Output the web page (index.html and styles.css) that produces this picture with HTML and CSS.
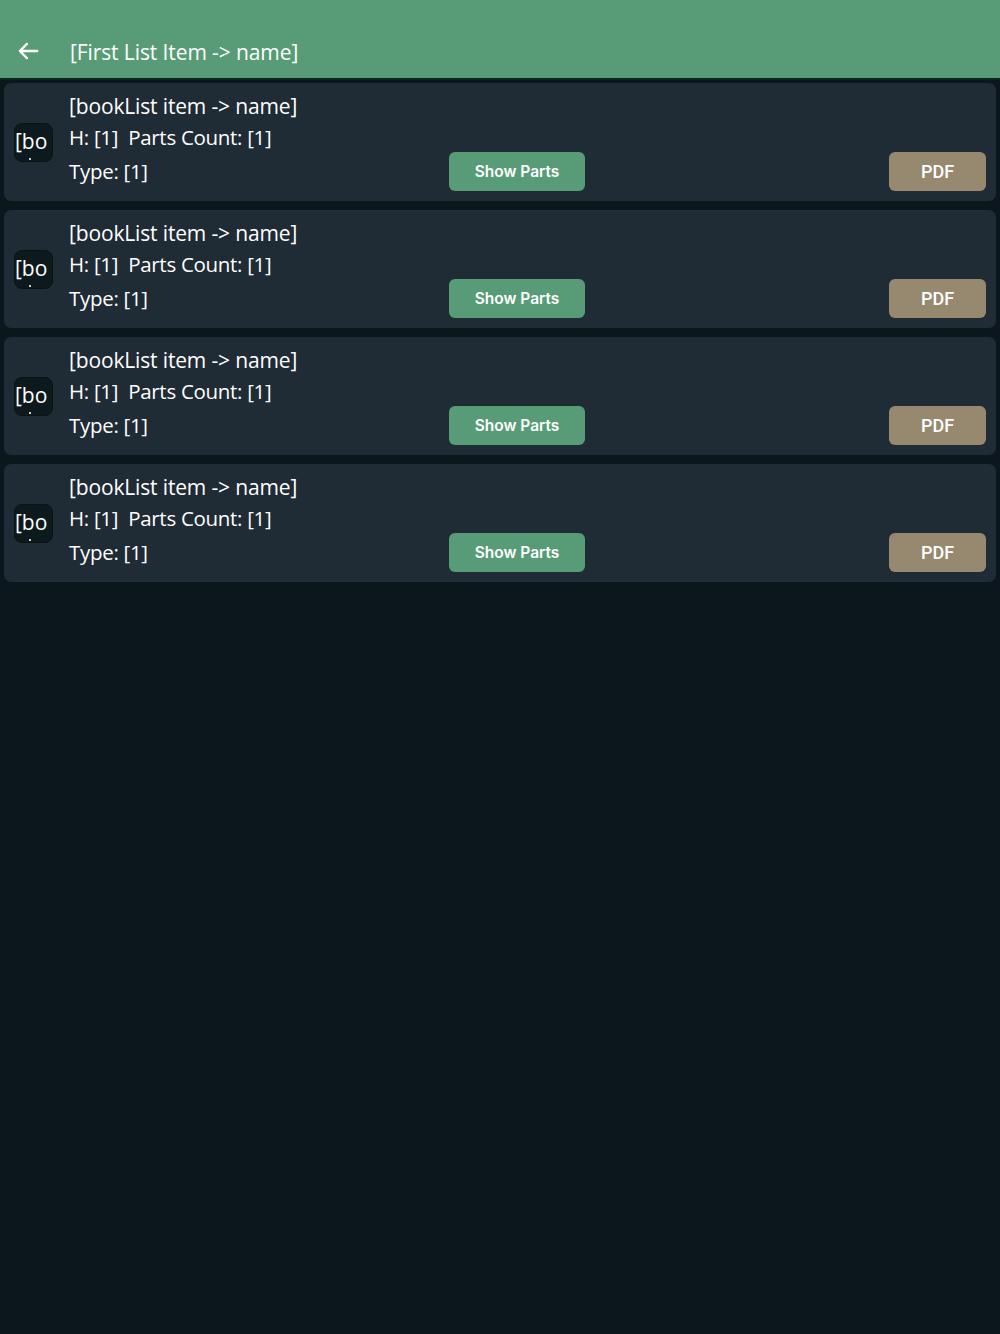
FILE: index.html
```html
<!DOCTYPE html>
<html lang="en">
<head>
  <meta charset="UTF-8" />
  <title>Book List</title>
  <link rel="stylesheet" href="styles.css">
</head>
<body>

<header class="topbar">
  <svg class="back" width="26" height="26" viewBox="0 0 24 24">
    <path d="M20.5 12H4.5M11 5.5L4.5 12l6.5 6.5" fill="none" stroke="#fff" stroke-width="2.2" stroke-linecap="round" stroke-linejoin="round"/>
  </svg>
  <h1 class="title">[First List Item -&gt; name]</h1>
</header>

<main class="list">
  <div class="card">
    <div class="thumb"><span>[bo</span><i></i></div>
    <div class="info">
      <div class="name">[bookList item -&gt; name]</div>
      <div class="meta"><span>H: [1]</span><span>Parts Count: [1]</span></div>
      <div class="bottom">
        <span class="type">Type: [1]</span>
        <button class="btn parts">Show Parts</button>
        <button class="btn pdf">PDF</button>
      </div>
    </div>
  </div>
  <div class="card">
    <div class="thumb"><span>[bo</span><i></i></div>
    <div class="info">
      <div class="name">[bookList item -&gt; name]</div>
      <div class="meta"><span>H: [1]</span><span>Parts Count: [1]</span></div>
      <div class="bottom">
        <span class="type">Type: [1]</span>
        <button class="btn parts">Show Parts</button>
        <button class="btn pdf">PDF</button>
      </div>
    </div>
  </div>
  <div class="card">
    <div class="thumb"><span>[bo</span><i></i></div>
    <div class="info">
      <div class="name">[bookList item -&gt; name]</div>
      <div class="meta"><span>H: [1]</span><span>Parts Count: [1]</span></div>
      <div class="bottom">
        <span class="type">Type: [1]</span>
        <button class="btn parts">Show Parts</button>
        <button class="btn pdf">PDF</button>
      </div>
    </div>
  </div>
  <div class="card">
    <div class="thumb"><span>[bo</span><i></i></div>
    <div class="info">
      <div class="name">[bookList item -&gt; name]</div>
      <div class="meta"><span>H: [1]</span><span>Parts Count: [1]</span></div>
      <div class="bottom">
        <span class="type">Type: [1]</span>
        <button class="btn parts">Show Parts</button>
        <button class="btn pdf">PDF</button>
      </div>
    </div>
  </div>
</main>

</body>
</html>
```

FILE: styles.css
```css
body {
  margin: 0;
  background: #0b171c;
  font-family: 'Open Sans', 'Lato', sans-serif;
  color: #fff;
  min-height: 1334px;
}
.topbar {
  height: 80px;
  background: #579c77;
  display: flex;
  align-items: flex-end;
  padding: 0 0 12px 15px;
  box-sizing: border-box;
  border-bottom: 2px solid #0e2420;
}
.back {
  margin-right: 29px;
  margin-bottom: 2px;
}
.title {
  margin: 0;
  font-size: 21px;
  font-weight: 500;
  letter-spacing: -0.1px;
  line-height: 28px;
}
.list {
  padding: 3px 4px;
  display: flex;
  flex-direction: column;
  gap: 9px;
}
.card {
  background: #1f2b35;
  border-radius: 7px;
  height: 118px;
  display: flex;
  align-items: center;
  padding: 0 10px;
  box-sizing: border-box;
}
.thumb {
  width: 39px;
  height: 39px;
  border-radius: 8px;
  background: #0c1a1d;
  border: 1px solid #0a1214;
  box-sizing: border-box;
  overflow: hidden;
  position: relative;
  flex-shrink: 0;
}
.thumb span {
  position: absolute;
  left: 0;
  top: 4px;
  font-size: 21px;
  line-height: 26px;
  white-space: nowrap;
}
.thumb i {
  position: absolute;
  left: 14px;
  bottom: 1px;
  width: 2px;
  height: 2px;
  background: #ccc;
}
.info {
  margin-left: 16px;
  flex: 1;
  padding-bottom: 2px;
}
.name {
  font-size: 21px;
  line-height: 31px;
  letter-spacing: -0.15px;
}
.meta, .type {
  font-size: 20.5px;
  line-height: 31px;
  letter-spacing: -0.3px;
}
.meta span + span {
  margin-left: 10px;
}
.bottom {
  display: flex;
  align-items: center;
  margin-top: -1px;
}
.type {
  width: 380px;
}
.btn {
  height: 39px;
  border: none;
  border-radius: 6px;
  color: #fff;
  cursor: pointer;
}
.parts {
  width: 136px;
  background: #579c77;
  font-family: 'Inter', sans-serif;
  font-size: 15.5px;
  font-weight: 600;
}
.pdf {
  width: 97px;
  margin-left: auto;
  background: #978870;
  font-family: 'Roboto', sans-serif;
  font-size: 18px;
  font-weight: 500;
}
```
